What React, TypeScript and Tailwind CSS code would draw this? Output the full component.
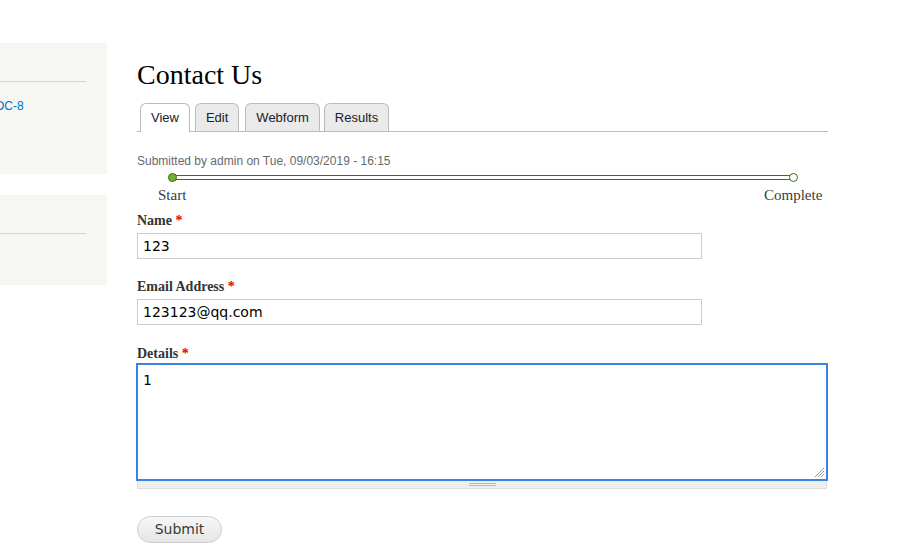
import React from "react";

export default function App() {
  return (
    <div className="w-[897px] h-[560px] bg-white overflow-hidden flex" style={{ fontFamily: '"Liberation Sans", Arial, sans-serif' }}>
      {/* Sidebar */}
      <div className="w-[107px] shrink-0 pt-[43px] flex flex-col gap-[21px] overflow-hidden">
        <div className="h-[131px] bg-[#f6f6f2] pt-[38px]">
          <div className="w-[86px] border-t border-[#d5d5d5]" />
          <div className="mt-[16px] ml-[-5px] text-[12px] text-[#0074bd] whitespace-nowrap leading-[16px]">OC-8</div>
        </div>
        <div className="h-[90px] bg-[#f6f6f2] pt-[38px]">
          <div className="w-[86px] border-t border-[#d5d5d5]" />
        </div>
      </div>

      {/* Main */}
      <div className="ml-[30px] w-[691px] shrink-0 pt-[58px]">
        <h1 className="text-[28px] leading-[34px] text-black" style={{ fontFamily: '"Liberation Serif", "Times New Roman", serif' }}>
          Contact Us
        </h1>
        <div className="mt-[11px] flex items-end border-b border-[#bbb] pl-[3px] h-[29px]">
          <div className="h-[29px] mb-[-1px] px-[10px] border border-b-0 border-[#bbb] rounded-t-[6px] bg-white text-[13px] text-[#222] flex items-center">View</div>
          <div className="ml-[5px] h-[28px] px-[10px] border border-b-0 border-[#bbb] rounded-t-[6px] bg-[#eaeaea] text-[13px] text-[#222] flex items-center">Edit</div>
          <div className="ml-[6px] h-[28px] px-[10px] border border-b-0 border-[#bbb] rounded-t-[6px] bg-[#eaeaea] text-[13px] text-[#222] flex items-center">Webform</div>
          <div className="ml-[4px] h-[28px] px-[10px] border border-b-0 border-[#bbb] rounded-t-[6px] bg-[#eaeaea] text-[13px] text-[#222] flex items-center">Results</div>
        </div>

        <div className="mt-[21px] text-[12px] leading-[16px] text-[#68696b]">Submitted by admin on Tue, 09/03/2019 - 16:15</div>

        {/* Progress bar */}
        <div className="relative h-[43px]">
          <div className="absolute left-[35px] right-[33px] top-[6px] h-[5px] border-y border-[#3c6e16] bg-white" />
          <div className="absolute left-[31px] top-[4px] w-[9px] h-[9px] rounded-full bg-[#75b030] border border-[#3c6e16]" />
          <div className="absolute left-[652px] top-[4px] w-[9px] h-[9px] rounded-full bg-white border border-[#3c6e16]" />
          <div className="absolute left-[21px] top-[17px] text-[15px] leading-[18px] text-[#3b3b3b]" style={{ fontFamily: '"Liberation Serif", "Times New Roman", serif' }}>Start</div>
          <div className="absolute left-[627px] top-[17px] text-[15px] leading-[18px] text-[#3b3b3b]" style={{ fontFamily: '"Liberation Serif", "Times New Roman", serif' }}>Complete</div>
        </div>

        {/* Fields */}
        <div style={{ fontFamily: '"Liberation Serif", "Times New Roman", serif' }}>
          <div className="text-[14px] leading-[18px] font-bold text-[#333]">
            Name <span className="text-[#e00]">*</span>
          </div>
          <div className="mt-[3px] w-[565px] h-[26px] border border-[#ccc] flex items-center px-[5px] text-[14px] text-black" style={{ fontFamily: '"DejaVu Sans", sans-serif' }}>123</div>

          <div className="mt-[19px] text-[14px] leading-[18px] font-bold text-[#333]">
            Email Address <span className="text-[#e00]">*</span>
          </div>
          <div className="mt-[3px] w-[565px] h-[26px] border border-[#ccc] flex items-center px-[5px] text-[14px] text-black" style={{ fontFamily: '"DejaVu Sans", sans-serif' }}>123123@qq.com</div>

          <div className="mt-[20px] text-[14px] leading-[18px] font-bold text-[#333]">
            Details <span className="text-[#e00]">*</span>
          </div>
          <div className="mt-0 ml-[-1px] w-[692px]">
            <div className="relative h-[118px] border-2 border-[#3a84df] px-[5px] pt-[6px] text-[14px] leading-[18px] text-black" style={{ fontFamily: '"DejaVu Sans Mono", "Liberation Mono", monospace' }}>
              1
              <svg className="absolute right-[1px] bottom-[1px]" width="11" height="11" viewBox="0 0 11 11">
                <line x1="10" y1="1" x2="1" y2="10" stroke="#999" strokeWidth="1" />
                <line x1="10" y1="4" x2="4" y2="10" stroke="#999" strokeWidth="1" />
                <line x1="10" y1="7" x2="7" y2="10" stroke="#999" strokeWidth="1" />
              </svg>
            </div>
            <div className="ml-[1px] w-[690px] h-[8px] bg-[#eee] border border-t-0 border-[#ddd] flex flex-col items-center justify-center gap-[1px]">
              <div className="w-[27px] h-px bg-[#bbb]" />
              <div className="w-[27px] h-px bg-[#bbb]" />
            </div>
          </div>

          <button className="mt-[27px] w-[85px] h-[27px] rounded-full border border-[#ccc] bg-gradient-to-b from-[#f7f7f7] to-[#e6e6e6] text-[14px] text-[#3a3a3a] flex items-center justify-center" style={{ fontFamily: '"DejaVu Sans", sans-serif' }}>
            Submit
          </button>
        </div>
      </div>
    </div>
  );
}
